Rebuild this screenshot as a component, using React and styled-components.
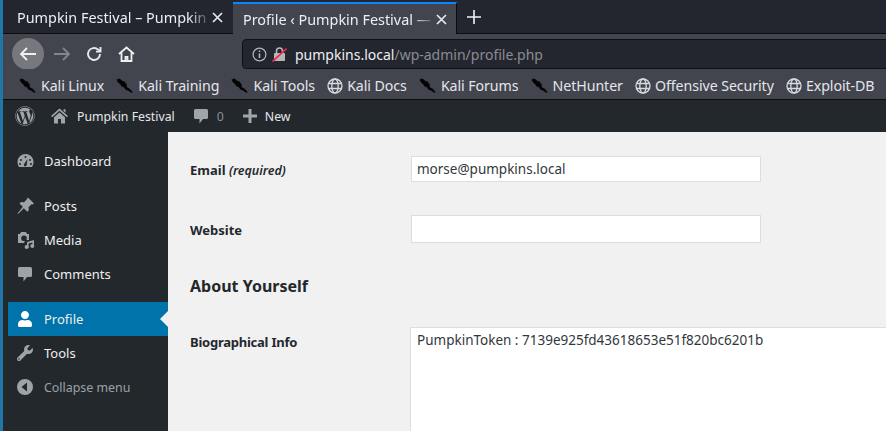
import React from "react";
import styled, { createGlobalStyle } from "styled-components";
import { FaWordpress, FaUser, FaWrench } from "react-icons/fa";

const Global = createGlobalStyle`
  html, body { margin: 0; padding: 0; width: 886px; height: 431px; overflow: hidden; background: #f1f1f1; }
  * { box-sizing: border-box; }
  #root { height: 431px; }
`;
const Page = styled.div`
  height: 431px; width: 886px; overflow: hidden; display: flex;
  border-left: 3px solid #1f76a8; font-family: "Noto Sans", sans-serif;
`;
const Main = styled.div`flex: 1; min-width: 0; display: flex; flex-direction: column;`;
const TabStrip = styled.div`height: 34px; flex: none; display: flex; background: #24262f; border-bottom: 1px solid #0c0c0d; padding-top: 2px;`;
const Tab = styled.div`
  width: ${p => p.$w}px; height: ${p => p.$active ? 32 : 31}px; flex: none; display: flex; align-items: center;
  padding: 0 9px 0 ${p => p.$active ? 10 : 14}px;
  color: #eceef1; font-size: 14.4px; position: relative;
  background: ${p => p.$active ? "#42454e" : "transparent"};
  border-top: ${p => p.$active ? "2px solid #0a84ff" : "0"};
  ${p => p.$active && "border-right: 1px solid #0c0c0d; margin-left: 1px; margin-bottom: -1px;"}
`;
const TabTitle = styled.span`
  flex: 1; min-width: 0; white-space: nowrap; overflow: hidden;
  mask-image: linear-gradient(90deg, #000 88%, transparent);
`;
const NewTab = styled.div`width: 34px; display: flex; align-items: center; justify-content: center; padding-bottom: 1px;`;
const NavBar = styled.div`height: 35px; flex: none; display: flex; align-items: center; background: #42454e; padding: 5px 0 0 9px;`;
const NavBack = styled.div`width: 32px; height: 32px; border-radius: 50%; background: #77787d; display: flex; align-items: center; justify-content: center; margin-right: 1px;`;
const NavBtn = styled.div`width: ${p => p.$w || 32}px; display: flex; align-items: center; justify-content: center;`;
const UrlBar = styled.div`
  flex: 1; height: 30px; margin-left: 99px; margin-right: -4px; background: #24262f; border: 1px solid #0f1013; border-radius: 4px 0 0 4px;
  display: flex; align-items: center; padding-left: 9px; font-size: 14px; color: #eceef1;
`;
const UrlDim = styled.span`color: #8a8c92;`;
const UrlIcons = styled.span`display: flex; align-items: center; gap: 5px; margin-right: 8px;`;
const Bookmarks = styled.div`height: 31px; flex: none; background: #42454e; border-bottom: 1px solid #0c0c0d; display: flex; align-items: center; padding-left: 16px; padding-top: 3px; gap: 12.2px;`;
const Bm = styled.div`display: flex; align-items: center; gap: 4px; color: #e4e6ea; font-size: 14.2px; letter-spacing: -.08px; white-space: nowrap;`;
const AdminBar = styled.div`height: 32px; flex: none; background: #23282d; display: flex; align-items: center; color: #eee; font-size: 12.3px; padding-left: 12px;`;
const AdminItem = styled.div`display: flex; align-items: center; gap: ${p => p.$gap ?? 8}px; margin-left: ${p => p.$ml || 0}px; color: ${p => p.$dim ? "#8b8f94" : "#e6e7e8"};`;
const AdminIcon = styled.span`display: flex; color: #a0a5aa;`;
const Body = styled.div`flex: 1; min-height: 0; display: flex;`;
const Side = styled.nav`width: 165px; flex: none; background: #23282d; padding-top: 12px; display: flex; flex-direction: column;`;
const Item = styled.div`
  height: 34px; flex: none; display: flex; align-items: center; position: relative;
  margin-left: ${p => p.$active ? 5 : 0}px;
  padding-left: ${p => p.$active ? 9 : 14}px;
  margin-bottom: ${p => p.$mb || 0}px;
  background: ${p => p.$active ? "#0073aa" : "transparent"};
  color: ${p => p.$dim ? "#9ca1a6" : "#eee"};
  font-size: ${p => p.$dim ? 12.4 : 13}px;
  ${p => p.$active && `&::after { content: ""; position: absolute; right: 0; top: 9px; border: 8px solid transparent; border-right-color: #f1f1f1; border-left: 0; }`}
`;
const ItemIcon = styled.span`width: 27px; flex: none; display: flex; color: ${p => p.$active ? "#fff" : "#9ea3a8"};`;
const Content = styled.main`flex: 1; min-width: 0; background: #f1f1f1; padding: 24px 0 0 22px; color: #23282d; font-size: 13px;`;
const Row = styled.div`display: flex; align-items: ${p => p.$top ? "flex-start" : "center"}; margin-bottom: ${p => p.$mb || 0}px;`;
const Label = styled.label`
  width: ${p => p.$top ? 220 : 221}px; flex: none; font-weight: 700; font-size: 13px;
  letter-spacing: ${p => p.$top ? "-.24px" : "0"};
  padding-top: ${p => p.$top ? 6 : 2}px;
`;
const Req = styled.em`font-weight: 600; font-size: 12.5px;`;
const Input = styled.div`
  width: 350px; height: ${p => p.$h || 26}px; background: #fff; border: 1px solid #ddd; padding: 0 5px 1px; display: flex; align-items: center;
  font-size: 13.5px; color: #32373c;
`;
const Heading = styled.h2`margin: 32px 0 30px; font-size: 16px; font-weight: 700; line-height: 22px; color: #23282d;`;
const Area = styled.div`
  height: 140px; flex: 1; margin-right: -10px; background: #fff; border: 1px solid #ddd; padding: 3px 6px; font-size: 13.5px; color: #32373c;
`;

const X = () => <svg width="11" height="11" viewBox="0 0 11 11"><path d="M1 1l9 9M10 1l-9 9" stroke="#e6e8ec" strokeWidth="1.7" /></svg>;
const Dragon = () => (
  <svg width="18" height="16" viewBox="0 0 18 16"><path d="M0.5 1.500l3-1 3 2.500 2 .5 2.500 3.500-.5 1.500 1.500 1.500 1.500.5 3 3.500-1 1-3.500-2.500-2-.5-2.500-3-2-.5-1.500-2.500-2-1.500z" fill="#040404" /></svg>
);
const Globe = () => (
  <svg width="16" height="16" viewBox="0 0 16 16" fill="none" stroke="#d8dade" strokeWidth="1.3"><circle cx="8" cy="8" r="7" /><ellipse cx="8" cy="8" rx="3.2" ry="7" /><path d="M1.500 5.500h13M1.500 10.500h13" /></svg>
);
const Bubble = () => (
  <svg width="16" height="16" viewBox="0 0 16 16" fill="currentColor"><path d="M2.500 1h11A1.500 1.500 0 0 1 15 2.500v7A1.500 1.500 0 0 1 13.500 11H10l-3.500 4.500V11h-4A1.500 1.500 0 0 1 1 9.500v-7A1.500 1.500 0 0 1 2.500 1z" /></svg>
);
const HomeIcon = () => (
  <svg width="17" height="16" viewBox="0 0 17 16" fill="currentColor"><path d="M8.500.5L17 8l-1.100 1.200L8.500 2.800 1.100 9.200 0 8z" /><path d="M12.500 1.200h2v3.600l-2-1.700z" /><path d="M3 9.200l5.500-4.700L14 9.200v6.300h-4V11H7v4.500H3z" /></svg>
);
const Gauge = () => (
  <svg width="17" height="16" viewBox="0 0 17 16" fill="currentColor"><path fillRule="evenodd" d="M8.500 1a8 8 0 0 1 8 8c0 1.800-.5 3.500-1.500 5H2c-1-1.500-1.500-3.200-1.500-5a8 8 0 0 1 8-8zM8.500 3a1 1 0 1 0 0 2 1 1 0 0 0 0-2zM4 6a1 1 0 1 0 0 2 1 1 0 0 0 0-2zM13 6a1 1 0 1 0 0 2 1 1 0 0 0 0-2zM3 10a1 1 0 1 0 0 2 1 1 0 0 0 0-2zM14 10a1 1 0 1 0 0 2 1 1 0 0 0 0-2zM10.500 6L7.500 10.500a1.500 1.500 0 1 0 2.300 1z" /></svg>
);
const Pin = () => (
  <svg width="18" height="18" viewBox="0 0 18 18" fill="currentColor"><path d="M11.500 1L17 6.500l-1.500 1-1-.3-3 3 .3 3-1.500 1.500-3.500-3.500L1 17l-.5-.5 5.300-6.800L2.500 6.500 4 5l3 .3 3-3-.2-1z" /></svg>
);
const MediaIcon = () => (
  <svg width="18" height="18" viewBox="0 0 18 18" fill="#9ea3a8"><path fillRule="evenodd" d="M1 3h2l1-2h5l1 2h2v6H9.500A4 4 0 0 0 7 12H1V3zm6 1.500a2.800 2.800 0 1 0 0 5.600 2.800 2.800 0 0 0 0-5.600z" /><path d="M10 11l7-2v7h-1.600v-4.500L11.600 12.500V17H10z" /><circle cx="9.600" cy="16" r="2" /><circle cx="15.300" cy="15" r="2" /></svg>
);
const CollapseIcon = () => (
  <svg width="16" height="16" viewBox="0 0 16 16"><path fillRule="evenodd" fill="currentColor" d="M8 0a8 8 0 1 1 0 16A8 8 0 0 1 8 0zm2 3.500L4.500 8l5.500 4.500z" /></svg>
);
const marks = [
  ["d", "Kali Linux"], ["d", "Kali Training"], ["d", "Kali Tools"], ["g", "Kali Docs"], ["d", "Kali Forums"], ["d", "NetHunter"], ["g", "Offensive Security"], ["g", "Exploit-DB"],
];

export default function App() {
  return (
    <Page>
      <Global />
      <Main>
        <TabStrip>
          <Tab $w={229}><TabTitle>Pumpkin Festival – Pumpkin Festival</TabTitle><X /></Tab>
          <Tab $w={224} $active><TabTitle>Profile ‹ Pumpkin Festival — WordPress</TabTitle><X /></Tab>
          <NewTab><svg width="14" height="14" viewBox="0 0 14 14"><path d="M7 0v14M0 7h14" stroke="#f2f3f5" strokeWidth="1.6" /></svg></NewTab>
        </TabStrip>
        <NavBar>
          <NavBack><svg width="18" height="16" viewBox="0 0 18 16" fill="none" stroke="#f0f0f2" strokeWidth="1.8"><path d="M17 8H2M8 2L2 8l6 6" /></svg></NavBack>
          <NavBtn $w={34}><svg width="18" height="16" viewBox="0 0 18 16" fill="none" stroke="#84868b" strokeWidth="1.8"><path d="M1 8h15M10 2l6 6-6 6" /></svg></NavBtn>
          <NavBtn $w={30}><svg width="16" height="16" viewBox="0 0 16 16" fill="none" stroke="#e8e9eb" strokeWidth="1.9"><path d="M14 8a6 6 0 1 1-2-4.500L14 5" /><path d="M14.500 1v4.600H10" /></svg></NavBtn>
          <NavBtn $w={34}><svg width="17" height="16" viewBox="0 0 17 16" fill="none" stroke="#eeeff1" strokeWidth="1.8"><path d="M1 8l7.500-6.500L16 8M3.500 6.500V15h10V6.500" /><path d="M7.500 15v-4h2v4" /></svg></NavBtn>
          <UrlBar>
            <UrlIcons>
              <svg width="15" height="15" viewBox="0 0 15 15" fill="none" stroke="#b5b6ba" strokeWidth="1.2"><circle cx="7.500" cy="7.500" r="6.400" /><path d="M7.500 6.500v4.500M7.500 3.600v1.400" strokeWidth="1.5" /></svg>
              <svg width="15" height="15" viewBox="0 0 15 15"><rect x="2" y="6" width="11" height="8" rx="1" fill="#b5b6ba" /><path d="M4.500 6V4a3 3 0 0 1 6 0v2" fill="none" stroke="#b5b6ba" strokeWidth="1.6" /><path d="M0.500 14.500L14.500 1.500" stroke="#f0264a" strokeWidth="1.7" /></svg>
            </UrlIcons>
            <span>pumpkins.local<UrlDim>/wp-admin/profile.php</UrlDim></span>
          </UrlBar>
        </NavBar>
        <Bookmarks>
          {marks.map(([t, n]) => <Bm key={n}>{t === "d" ? <Dragon /> : <Globe />}<span>{n}</span></Bm>)}
        </Bookmarks>
        <AdminBar>
          <FaWordpress size={20} color="#a0a5aa" />
          <AdminItem $ml={16} $gap={9}><AdminIcon><HomeIcon /></AdminIcon>Pumpkin Festival</AdminItem>
          <AdminItem $ml={18} $gap={8} $dim><AdminIcon><Bubble /></AdminIcon>0</AdminItem>
          <AdminItem $ml={19} $gap={8}><svg width="14" height="14" viewBox="0 0 14 14"><path d="M7 0v14M0 7h14" stroke="#a0a5aa" strokeWidth="3" /></svg>New</AdminItem>
        </AdminBar>
        <Body>
          <Side>
            <Item $mb={11}><ItemIcon><Gauge /></ItemIcon>Dashboard</Item>
            <Item><ItemIcon><Pin /></ItemIcon>Posts</Item>
            <Item><ItemIcon><MediaIcon /></ItemIcon>Media</Item>
            <Item $mb={11}><ItemIcon><Bubble /></ItemIcon>Comments</Item>
            <Item $active><ItemIcon $active><FaUser size={16} /></ItemIcon>Profile</Item>
            <Item><ItemIcon><FaWrench size={16} /></ItemIcon>Tools</Item>
            <Item $dim><ItemIcon><CollapseIcon /></ItemIcon>Collapse menu</Item>
          </Side>
          <Content>
            <Row $mb={33}><Label>Email <Req>(required)</Req></Label><Input>morse@pumpkins.local</Input></Row>
            <Row><Label>Website</Label><Input $h={28} /></Row>
            <Heading>About Yourself</Heading>
            <Row $top><Label $top>Biographical Info</Label><Area>PumpkinToken : 7139e925fd43618653e51f820bc6201b</Area></Row>
          </Content>
        </Body>
      </Main>
    </Page>
  );
}
